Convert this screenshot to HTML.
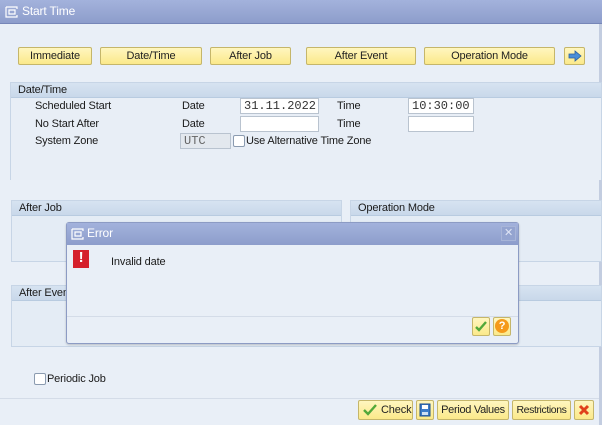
<!DOCTYPE html>
<html><head><meta charset="utf-8"><style>
*{margin:0;padding:0;box-sizing:border-box}
body{width:602px;height:425px;overflow:hidden;background:#e9eff7;font-family:"Liberation Sans",sans-serif;font-size:11px;color:#1a1a1a;position:relative;letter-spacing:-0.15px}
.a{position:absolute}
.title{left:0;top:0;width:602px;height:24px;background:linear-gradient(#a3b2dc,#8d9dcb);border-bottom:1px solid #7686b8;color:#fff;font-size:12px;line-height:23px;padding-left:22px}
.btn{position:absolute;height:18px;background:linear-gradient(#fff6bf,#fbe98a);border:1px solid #c5b66a;border-radius:2px;text-align:center;line-height:16px;font-size:11px;color:#222;white-space:nowrap}
.grp{position:absolute;border:1px solid #c7d5e6;background:#e4ecf5}
.gh{height:15px;background:linear-gradient(#d7e3f1,#c9d8ea);border-bottom:1px solid #b8cbe0;padding-left:7px;line-height:14px;font-size:11px}
.inp{position:absolute;height:16px;background:#fff;border:1px solid #b9c3cf;font-family:"Liberation Mono",monospace;font-size:12px;line-height:14px;padding-left:3px;color:#333;letter-spacing:0}
.cb{position:absolute;width:12px;height:12px;background:#fff;border:1px solid #8b9bb0;border-radius:2px}
.lb{position:absolute;font-size:11px}
</style></head><body>
<div class="a title">Start Time</div>
<svg class="a" style="left:5px;top:6px" width="14" height="12" viewBox="0 0 14 12"><path d="M1 1h11v2M1 1v10h11v-2M4 4h6v4H4z" fill="none" stroke="#fff" stroke-width="1.2"/></svg>
<div class="a" style="left:599px;top:24px;width:3px;height:401px;background:#c3cde0"></div>

<div class="btn" style="left:18px;top:47px;width:74px">Immediate</div>
<div class="btn" style="left:100px;top:47px;width:102px">Date/Time</div>
<div class="btn" style="left:210px;top:47px;width:81px">After Job</div>
<div class="btn" style="left:306px;top:47px;width:110px">After Event</div>
<div class="btn" style="left:424px;top:47px;width:131px">Operation Mode</div>
<div class="btn" style="left:564px;top:47px;width:21px"><svg width="14" height="12" viewBox="0 0 14 12" style="margin-top:2px"><path d="M1 4h6V1l6 5-6 5V8H1z" fill="#4a8fd8" stroke="#2a5f9f" stroke-width=".8"/></svg></div>

<div class="grp" style="left:10px;top:82px;width:592px;height:98px;border-bottom:none;background:#e8eef6"><div class="gh">Date/Time</div></div>
<div class="lb" style="left:35px;top:100px">Scheduled Start</div>
<div class="lb" style="left:182px;top:100px">Date</div>
<div class="inp" style="left:240px;top:98px;width:79px">31.11.2022</div>
<div class="lb" style="left:337px;top:100px">Time</div>
<div class="inp" style="left:408px;top:98px;width:66px">10:30:00</div>
<div class="lb" style="left:35px;top:118px">No Start After</div>
<div class="lb" style="left:182px;top:118px">Date</div>
<div class="inp" style="left:240px;top:116px;width:79px"></div>
<div class="lb" style="left:337px;top:118px">Time</div>
<div class="inp" style="left:408px;top:116px;width:66px"></div>
<div class="lb" style="left:35px;top:135px">System Zone</div>
<div class="inp" style="left:180px;top:133px;width:51px;background:#e3e8ee;color:#666">UTC</div>
<div class="cb" style="left:233px;top:135px"></div>
<div class="lb" style="left:246px;top:135px">Use Alternative Time Zone</div>

<div class="grp" style="left:11px;top:200px;width:331px;height:62px"><div class="gh">After Job</div></div>
<div class="grp" style="left:350px;top:200px;width:252px;height:62px"><div class="gh">Operation Mode</div></div>
<div class="grp" style="left:11px;top:285px;width:591px;height:62px"><div class="gh">After Event</div></div>

<div class="cb" style="left:34px;top:373px"></div>
<div class="lb" style="left:47px;top:373px">Periodic Job</div>

<div class="a" style="left:0;top:398px;width:599px;height:27px;border-top:1px solid #d4dce8;background:#e9eff7"></div>
<div class="btn" style="left:358px;top:400px;width:55px;height:20px;line-height:18px"><span class="a" style="left:22px;top:0">Check</span><svg class="a" style="left:4px;top:3px" width="14" height="12" viewBox="0 0 14 12"><path d="M1 6l4 4 8-9" fill="none" stroke="#52a83a" stroke-width="2.4"/></svg></div>
<div class="btn" style="left:416px;top:400px;width:18px;height:20px"><svg width="12" height="14" viewBox="0 0 12 14" style="margin-top:2px"><rect x="1" y="1" width="10" height="12" fill="#3d7cc9" stroke="#1f4f8f"/><rect x="3" y="2" width="6" height="4" fill="#fff"/><rect x="3" y="9" width="6" height="3" fill="#cfe0f4"/></svg></div>
<div class="btn" style="left:437px;top:400px;width:72px;height:20px;line-height:18px;letter-spacing:-0.3px">Period Values</div>
<div class="btn" style="left:512px;top:400px;width:59px;height:20px;line-height:18px;letter-spacing:-0.4px;font-size:10.5px">Restrictions</div>
<div class="btn" style="left:574px;top:400px;width:20px;height:20px"><svg width="12" height="12" viewBox="0 0 12 12" style="margin-top:3px"><path d="M2 2l8 8M10 2l-8 8" stroke="#e0401c" stroke-width="3"/></svg></div>

<!-- error dialog -->
<div class="a" style="left:66px;top:222px;width:453px;height:122px;background:#e9eff7;border:1px solid #8c9bc4;border-radius:3px;box-shadow:0 1px 2px rgba(0,0,0,.2)">
<div style="height:22px;background:linear-gradient(#a3b2dc,#8d9dcb);color:#fff;font-size:12px;line-height:21px;padding-left:20px">Error</div>
<svg class="a" style="left:4px;top:5px" width="14" height="12" viewBox="0 0 14 12"><path d="M1 1h11v2M1 1v10h11v-2M4 4h6v4H4z" fill="none" stroke="#fff" stroke-width="1.2"/></svg>
<div class="a" style="left:434px;top:3px;width:15px;height:15px;border:1px solid #a8b5d8;background:#94a4d0;color:#dfe5f5;text-align:center;line-height:13px;font-size:11px">✕</div>
<div class="a" style="left:6px;top:27px;width:16px;height:18px;background:#d5202c;color:#fff;font-weight:bold;text-align:center;font-size:15px;line-height:16px">!</div>
<div class="lb" style="left:44px;top:33px">Invalid date</div>
<div class="a" style="left:0;top:93px;width:451px;height:28px;border-top:1px solid #d4dce8"></div>
<div class="btn" style="left:405px;top:94px;width:18px;height:19px"><svg width="12" height="11" viewBox="0 0 12 11" style="margin-top:3px"><path d="M1 6l3 3 7-8" fill="none" stroke="#52a83a" stroke-width="2.4"/></svg></div>
<div class="btn" style="left:426px;top:94px;width:18px;height:19px"><div style="width:14px;height:14px;margin:1px auto;border-radius:50%;background:#f59a1a;color:#fff;font-weight:bold;font-size:11px;line-height:14px">?</div></div>
</div>
</body></html>
